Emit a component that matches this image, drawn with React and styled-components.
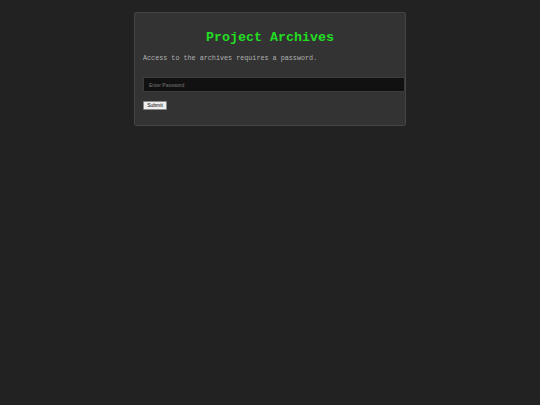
import React from 'react';
import styled, { createGlobalStyle } from 'styled-components';

const GlobalStyle = createGlobalStyle`
  html, body {
    margin: 0;
    padding: 0;
    background: #222222;
  }
`;

const Card = styled.div`
  box-sizing: border-box;
  width: 272px;
  margin: 12px auto 0;
  padding: 8px 8px 15px;
  background: #333333;
  border: 1px solid #444444;
  border-radius: 2px;
`;

const Title = styled.h1`
  margin: 9px 0 0;
  font-family: "Liberation Mono", "Courier New", monospace;
  font-size: 13.33px;
  line-height: 15px;
  font-weight: bold;
  color: #22dd22;
  text-align: center;
`;

const Note = styled.p`
  margin: 9px 0 0;
  font-family: "Liberation Mono", "Courier New", monospace;
  font-size: 6.75px;
  line-height: 8px;
  color: #b0b0b0;
`;

const Form = styled.form`
  display: flex;
  flex-direction: column;
  align-items: flex-start;
  margin-top: 15px;
  gap: 9px;
`;

const PasswordInput = styled.input`
  box-sizing: border-box;
  width: 262px;
  height: 15px;
  margin: 0;
  padding: 0 5px;
  background: #111111;
  border: 1px solid #3c3c3c;
  border-radius: 1px;
  color: #dddddd;
  font-family: "Liberation Sans", Arial, sans-serif;
  font-size: 5px;
  outline: none;

  &::placeholder {
    color: #777777;
  }
`;

const SubmitButton = styled.button`
  box-sizing: border-box;
  height: 9px;
  width: 24px;
  margin: 0;
  padding: 0;
  background: #efefef;
  border: 1px solid #8a8a8a;
  border-radius: 1px;
  color: #000000;
  font-family: "Liberation Sans", Arial, sans-serif;
  font-size: 5px;
  line-height: 7px;
`;

export default function App() {
  return (
    <>
      <GlobalStyle />
      <Card>
        <Title>Project Archives</Title>
        <Note>Access to the archives requires a password.</Note>
        <Form onSubmit={(e) => e.preventDefault()}>
          <PasswordInput type="password" placeholder="Enter Password" />
          <SubmitButton type="submit">Submit</SubmitButton>
        </Form>
      </Card>
    </>
  );
}
